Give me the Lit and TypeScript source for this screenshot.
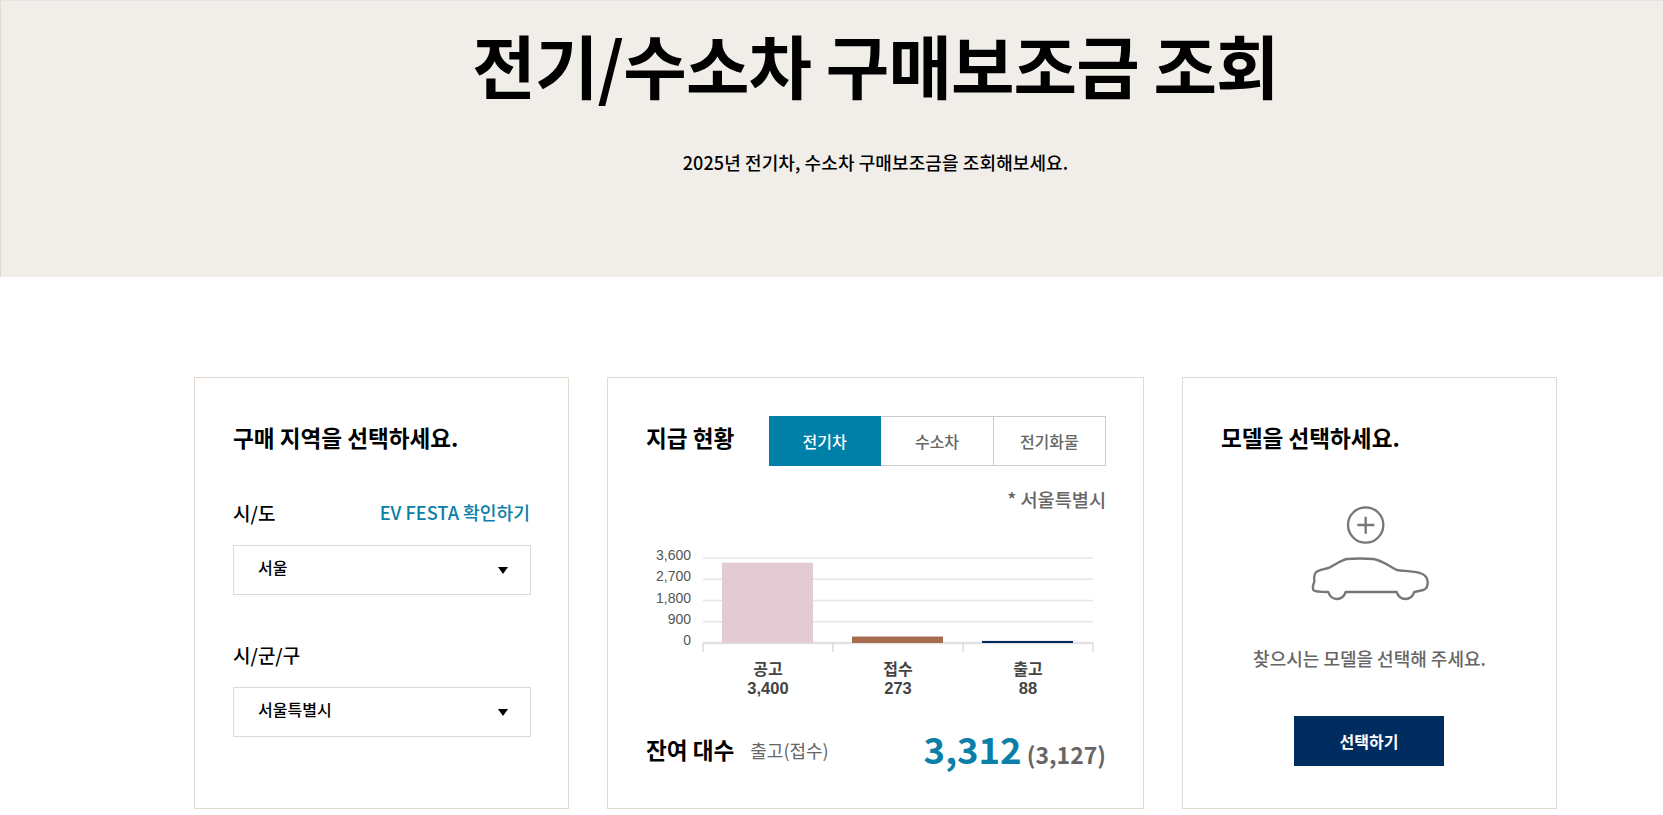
import { html, css, svg, LitElement } from 'lit';
import { customElement } from 'lit/decorators.js';

const ticks = [3600, 2700, 1800, 900, 0];
const bars = [
  { name: '공고', value: 3400, color: '#e2cbd3' },
  { name: '접수', value: 273, color: '#a56c50' },
  { name: '출고', value: 88, color: '#002c5f' },
];

// chart geometry, relative to the svg box
const axisY = 103;
const topY = 18;
const y = (v: number) => axisY - (v / 3600) * (axisY - topY);

@customElement('app-root')
export class AppRoot extends LitElement {
  static styles = css`
    :host {
      display: block;
      font-family: 'Noto Sans CJK KR', 'Noto Sans', sans-serif;
      color: #000;
    }
    .hero {
      box-sizing: border-box;
      height: 277px;
      background: #f1eee9;
      border-top: 1px solid #e6e4e0;
      border-left: 1px solid #e2dad0;
      padding-left: 87px;
      text-align: center;
    }
    .hero h1 {
      margin: 0;
      padding-top: 12px;
      font-size: 69px;
      line-height: 102px;
      font-weight: 700;
      letter-spacing: -0.9px;
    }
    .hero p {
      margin: 34px 0 0;
      font-size: 18px;
      line-height: 26px;
      font-weight: 500;
      letter-spacing: 0.1px;
    }
    .cards {
      display: flex;
      gap: 38px;
      padding: 100px 0 0 194px;
    }
    .card {
      box-sizing: border-box;
      height: 432px;
      padding: 38px;
      border: 1px solid #e2dad0;
    }
    .narrow { width: 375px; }
    .wide { width: 537px; }
    h2 {
      margin: 0;
      height: 50px;
      font-size: 22.6px;
      line-height: 44px;
      font-weight: 700;
    }
    .label-row {
      display: flex;
      justify-content: space-between;
      align-items: center;
      height: 26px;
      font-size: 19px;
      font-weight: 500;
    }
    .first { margin-top: 33px; }
    .second { margin-top: 46px; }
    .link {
      color: #0a80a8;
      font-size: 18.2px;
    }
    .select {
      box-sizing: border-box;
      display: flex;
      justify-content: space-between;
      align-items: center;
      width: 298px;
      height: 50px;
      margin-top: 20px;
      padding: 0 22px 6px 24px;
      border: 1px solid #e2dad0;
      font-size: 16px;
      font-weight: 500;
    }
    .arrow {
      position: relative;
      top: 3px;
      width: 0;
      height: 0;
      border-left: 5px solid transparent;
      border-right: 5px solid transparent;
      border-top: 7px solid #000;
    }
    .status-head {
      display: flex;
      justify-content: space-between;
      margin-right: -1px;
    }
    .tabs {
      display: grid;
      grid-template-columns: repeat(3, 1fr);
      width: 337px;
      height: 50px;
    }
    .tab {
      display: flex;
      justify-content: center;
      align-items: center;
      border: 1px solid #ccc;
      border-left: none;
      color: #666;
      font-size: 16px;
      font-weight: 500;
    }
    .tab.on {
      background: #007fa8;
      border-color: #007fa8;
      color: #fff;
    }
    .note {
      margin: 20px -1px 0 0;
      color: #666;
      font-size: 18.6px;
      line-height: 26px;
      font-weight: 500;
      text-align: right;
    }
    .chart {
      display: block;
      margin-top: 28px;
    }
    .tick-label {
      font-family: 'Liberation Sans', sans-serif;
      font-size: 14px;
      fill: #555;
    }
    .bar-labels {
      display: grid;
      grid-template-columns: repeat(3, 1fr);
      width: 390px;
      margin: 6px 0 0 57px;
      color: #444;
      font-size: 16px;
      line-height: 20px;
      font-weight: 700;
      text-align: center;
    }
    .bar-labels span { display: block; }
    .bar-labels .num {
      font-family: 'Liberation Sans', sans-serif;
      font-size: 16.5px;
    }
    .remain {
      display: flex;
      align-items: center;
      height: 50px;
      margin-top: 27px;
    }
    .remain h2 {
      height: auto;
      line-height: 50px;
    }
    .remain small {
      margin-left: 16px;
      color: #666;
      font-size: 18px;
      font-weight: 400;
    }
    .remain .total {
      margin: 0 -1px 4px auto;
      color: #666;
      font-size: 23px;
      font-weight: 700;
    }
    .total b {
      color: #0a80a8;
      font-size: 36.5px;
      font-weight: 700;
    }
    .model h2 { text-align: left; }
    .model svg {
      display: block;
      margin: 24px 0 0 59px;
    }
    .model p {
      margin: 35px 0 0;
      color: #666;
      font-size: 18px;
      line-height: 26px;
      font-weight: 500;
      text-align: center;
    }
    .pick {
      display: flex;
      justify-content: center;
      align-items: center;
      width: 150px;
      height: 50px;
      margin: 45px 0 0 73px;
      background: #002c5f;
      color: #fff;
      font-size: 16px;
      font-weight: 700;
    }
  `;

  renderChart() {
    return html`
      <svg class="chart" width="461" height="112" viewBox="0 0 461 112">
        ${ticks.map(t => svg`
          <line x1="57" x2="447" y1=${y(t)} y2=${y(t)} stroke=${t ? '#e6e6e6' : '#e2e2e2'} stroke-width=${t ? 1.5 : 2.5}></line>
          <text class="tick-label" x="45" y=${y(t) + 2} text-anchor="end">${t.toLocaleString('en-US')}</text>
        `)}
        ${[57, 187, 317, 447].map(x => svg`
          <line x1=${x} x2=${x} y1="103" y2="112" stroke="#ccc"></line>
        `)}
        ${bars.map((b, i) => svg`
          <rect x=${76 + i * 130} y=${y(b.value)} width="91" height=${axisY - y(b.value)} fill=${b.color}></rect>
        `)}
      </svg>
      <div class="bar-labels">
        ${bars.map(b => html`
          <div><span>${b.name}</span><span class="num">${b.value.toLocaleString('en-US')}</span></div>
        `)}
      </div>
    `;
  }

  render() {
    return html`
      <section class="hero">
        <h1>전기/수소차 구매보조금 조회</h1>
        <p>2025년 전기차, 수소차 구매보조금을 조회해보세요.</p>
      </section>
      <div class="cards">
        <section class="card narrow">
          <h2>구매 지역을 선택하세요.</h2>
          <div class="label-row first"><span>시/도</span><span class="link">EV FESTA 확인하기</span></div>
          <div class="select"><span>서울</span><i class="arrow"></i></div>
          <div class="label-row second"><span>시/군/구</span></div>
          <div class="select"><span>서울특별시</span><i class="arrow"></i></div>
        </section>
        <section class="card wide">
          <div class="status-head">
            <h2>지급 현황</h2>
            <div class="tabs">
              <div class="tab on">전기차</div>
              <div class="tab">수소차</div>
              <div class="tab">전기화물</div>
            </div>
          </div>
          <div class="note">* 서울특별시</div>
          ${this.renderChart()}
          <div class="remain">
            <h2>잔여 대수</h2>
            <small>출고(접수)</small>
            <span class="total"><b>3,312</b> (3,127)</span>
          </div>
        </section>
        <section class="card narrow model">
          <h2>모델을 선택하세요.</h2>
          <svg width="170" height="120" viewBox="0 0 510 360" fill="none" stroke="#777" stroke-width="7">
            <circle cx="257" cy="105" r="53"></circle>
            <path d="M232 105H283M257 80V131"></path>
            <path d="M145 306C150 322 160 327 171 327C182 327 192 320 197 306L350 306C355 320 365 327 376 327C387 327 398 320 403 306L430 300C441 296 444 288 443 275C442 262 436 254 420 249C400 244 370 243 350 240C325 228 305 210 280 207C255 205 225 205 200 207C180 212 165 225 150 232C135 238 115 240 108 247C100 255 103 265 103 275C100 283 96 290 100 300C104 306 125 306 145 306Z" stroke-linejoin="round"></path>
          </svg>
          <p>찾으시는 모델을 선택해 주세요.</p>
          <div class="pick">선택하기</div>
        </section>
      </div>
    `;
  }
}
